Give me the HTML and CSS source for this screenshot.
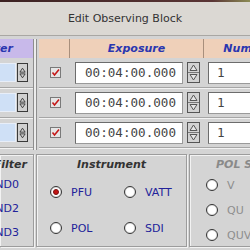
FILE: index.html
```
<!DOCTYPE html>
<html lang="en">
<head>
  <meta charset="UTF-8">
  <title>Edit Observing Block</title>
  <link rel="stylesheet" href="styles.css">
</head>
<body>

  <div class="desk"></div>
  <div class="titlebar">Edit Observing Block</div>

  <div class="dialog">
    <div class="table">
      <div class="left-col">
        <div class="head lav"><span>Filter</span></div>
        <div class="row clip">
          <span class="combo"></span>
          <span class="mini-spin"><svg width="8" height="15" viewBox="0 0 8 15"><path d="M4 2 L7 6.5 H1 Z M4 13 L7 8.5 H1 Z" fill="none" stroke="#333" stroke-width="1"/></svg></span>
        </div>
        <div class="row clip">
          <span class="combo"></span>
          <span class="mini-spin"><svg width="8" height="15" viewBox="0 0 8 15"><path d="M4 2 L7 6.5 H1 Z M4 13 L7 8.5 H1 Z" fill="none" stroke="#333" stroke-width="1"/></svg></span>
        </div>
        <div class="row clip">
          <span class="combo"></span>
          <span class="mini-spin"><svg width="8" height="15" viewBox="0 0 8 15"><path d="M4 2 L7 6.5 H1 Z M4 13 L7 8.5 H1 Z" fill="none" stroke="#333" stroke-width="1"/></svg></span>
        </div>
      </div>

      <div class="divider"></div>

      <div class="right-col">
        <div class="head peach">
          <span class="c-check"></span>
          <span class="c-exp">Exposure</span>
          <span class="c-num">Number</span>
        </div>
        <div class="row">
          <span class="c-check"><svg class="check" width="11" height="11" viewBox="0 0 11 11"><rect x="0.5" y="0.5" width="10" height="10" fill="#e6e6e6" stroke="#7a7a7a"/><path d="M2.5 5.5 L4.5 8 L9 2.5" fill="none" stroke="#c41a1a" stroke-width="1.6"/></svg></span>
          <span class="c-exp"><span class="time">00:04:00.000</span><span class="spin"><svg width="11" height="19" viewBox="0 0 11 19"><path d="M5.5 2 L9 7.5 H2 Z" fill="#e4e4e4" stroke="#555"/><path d="M0 9.5 H11" stroke="#777"/><path d="M5.5 17 L9 11.5 H2 Z" fill="#e4e4e4" stroke="#555"/></svg></span></span>
          <span class="c-num"><span class="num">1</span></span>
        </div>
        <div class="row">
          <span class="c-check"><svg class="check" width="11" height="11" viewBox="0 0 11 11"><rect x="0.5" y="0.5" width="10" height="10" fill="#e6e6e6" stroke="#7a7a7a"/><path d="M2.5 5.5 L4.5 8 L9 2.5" fill="none" stroke="#c41a1a" stroke-width="1.6"/></svg></span>
          <span class="c-exp"><span class="time">00:04:00.000</span><span class="spin"><svg width="11" height="19" viewBox="0 0 11 19"><path d="M5.5 2 L9 7.5 H2 Z" fill="#e4e4e4" stroke="#555"/><path d="M0 9.5 H11" stroke="#777"/><path d="M5.5 17 L9 11.5 H2 Z" fill="#e4e4e4" stroke="#555"/></svg></span></span>
          <span class="c-num"><span class="num">1</span></span>
        </div>
        <div class="row">
          <span class="c-check"><svg class="check" width="11" height="11" viewBox="0 0 11 11"><rect x="0.5" y="0.5" width="10" height="10" fill="#e6e6e6" stroke="#7a7a7a"/><path d="M2.5 5.5 L4.5 8 L9 2.5" fill="none" stroke="#c41a1a" stroke-width="1.6"/></svg></span>
          <span class="c-exp"><span class="time">00:04:00.000</span><span class="spin"><svg width="11" height="19" viewBox="0 0 11 19"><path d="M5.5 2 L9 7.5 H2 Z" fill="#e4e4e4" stroke="#555"/><path d="M0 9.5 H11" stroke="#777"/><path d="M5.5 17 L9 11.5 H2 Z" fill="#e4e4e4" stroke="#555"/></svg></span></span>
          <span class="c-num"><span class="num">1</span></span>
        </div>
      </div>
    </div>

    <div class="panels">
      <div class="panel p-filter">
        <div class="ptitle">Filter</div>
        <div class="flist">
          <span>ND0</span>
          <span>ND2</span>
          <span>ND3</span>
        </div>
      </div>

      <div class="panel p-inst">
        <div class="ptitle">Instrument</div>
        <div class="igrid">
          <label class="opt"><span class="radio on"></span>PFU</label>
          <label class="opt"><span class="radio"></span>VATT</label>
          <label class="opt"><span class="radio"></span>POL</label>
          <label class="opt"><span class="radio"></span>SDI</label>
        </div>
      </div>

      <div class="panel p-pol">
        <div class="ptitle">POL Setting</div>
        <div class="plist">
          <label class="opt off"><span class="radio"></span>V</label>
          <label class="opt off"><span class="radio"></span>QU</label>
          <label class="opt off"><span class="radio"></span>QUV</label>
        </div>
      </div>
    </div>
  </div>

</body>
</html>
```

FILE: styles.css
```
body {
  margin: 0;
  width: 250px;
  height: 250px;
  overflow: hidden;
  background: #d4d4d4;
  font-family: 'DejaVu Sans', sans-serif;
}

.desk {
  height: 2px;
  background: linear-gradient(90deg, #3c2222, #5a3535 85%, #8c8c55);
}

.titlebar {
  height: 33px;
  background: #dbd8d3;
  border-bottom: 1px solid #a9a7a3;
  display: flex;
  align-items: center;
  justify-content: center;
  font-size: 11px;
  color: #333;
}

.dialog {
  padding-top: 3px;
}

.table {
  display: flex;
  height: 111px;
}

.left-col {
  width: 33px;
  overflow: hidden;
}

.divider {
  width: 2px;
  margin-right: 2px;
  border-left: 1px solid #8e8e8e;
  border-right: 1px solid #8e8e8e;
  background: #ececec;
}

.right-col {
  flex: 1;
  overflow: hidden;
}

.head {
  height: 19px;
  display: flex;
  align-items: center;
  font-size: 11px;
  font-weight: bold;
  font-style: italic;
  color: #2a36b0;
  white-space: nowrap;
}

.lav {
  background: #c8b9ea;
  justify-content: flex-end;
  padding-right: 20px;
}

.peach {
  background: #efd0b9;
}

.peach > span {
  height: 100%;
  display: flex;
  align-items: center;
  justify-content: center;
}

.c-check {
  width: 30px;
  flex: none;
  display: flex;
  align-items: center;
  justify-content: center;
}

.c-exp {
  width: 133px;
  flex: none;
  display: flex;
  align-items: center;
  border-left: 1px solid #a88f7c;
  border-right: 1px solid #a88f7c;
}

.row .c-exp {
  border-color: transparent;
}

.c-num {
  width: 88px;
  flex: none;
  display: flex;
  align-items: center;
}

.row {
  height: 29px;
  display: flex;
  align-items: center;
  border-bottom: 1px solid #a6a6a6;
  box-shadow: 0 1px 0 #f2f2f2;
}

.clip {
  justify-content: flex-end;
  padding-right: 5px;
  gap: 1px;
}

.combo {
  width: 40px;
  height: 19px;
  flex: none;
  background: #cfe0f6;
  border: 1px solid #e8eef8;
  box-sizing: border-box;
}

.mini-spin {
  width: 9px;
  height: 17px;
  flex: none;
  border: 1px solid #3a3a3a;
  background: #d0d0d0;
  display: flex;
  align-items: center;
  justify-content: center;
}

.mini-spin svg {
  width: 7px;
  height: 14px;
}

.check {
  margin-left: 2px;
}

.time {
  margin-left: 5px;
  width: 108px;
  height: 22px;
  box-sizing: border-box;
  background: #fff;
  border: 1px solid #9a9a9a;
  border-top-color: #6c6c6c;
  border-left-color: #6c6c6c;
  font-family: 'DejaVu Sans Mono', monospace;
  font-size: 12.6px;
  color: #444;
  padding-left: 9px;
  line-height: 20px;
}

.spin {
  margin-left: 4px;
  width: 13px;
  height: 21px;
  box-sizing: border-box;
  border: 1px solid #555;
  background: #d2d2d2;
  display: flex;
}

.num {
  margin-left: 4px;
  width: 100px;
  height: 22px;
  flex: none;
  box-sizing: border-box;
  background: #fff;
  border: 1px solid #9a9a9a;
  border-top-color: #6c6c6c;
  border-left-color: #6c6c6c;
  font-family: 'DejaVu Sans Mono', monospace;
  font-size: 12.6px;
  color: #444;
  padding-left: 8px;
  line-height: 20px;
}

.panels {
  margin-top: 4px;
  display: flex;
  gap: 2px;
  height: 93px;
}

.panel {
  flex: none;
  box-sizing: border-box;
  border: 1px solid #9c9c9c;
  box-shadow: inset 1px 1px 0 #f2f2f2, 1px 1px 0 #f2f2f2;
}

.ptitle {
  height: 18px;
  display: flex;
  align-items: center;
  justify-content: center;
  font-size: 11px;
  font-weight: bold;
  font-style: italic;
  color: #333;
  white-space: nowrap;
}

.p-filter {
  width: 34px;
  border-left: none;
  overflow: hidden;
}

.p-filter .ptitle {
  justify-content: flex-end;
  padding-right: 6px;
}

.flist {
  display: flex;
  flex-direction: column;
  align-items: flex-end;
  padding-right: 14px;
  padding-top: 5px;
  gap: 11px;
  font-size: 11px;
  color: #22229a;
}

.p-inst {
  width: 151px;
}

.igrid {
  display: grid;
  grid-template-columns: 74px 74px;
  row-gap: 22px;
  padding: 12px 0 0 13px;
}

.p-pol {
  width: 80px;
  border-right: none;
  overflow: hidden;
}

.p-pol .ptitle {
  color: #8a8a8a;
  justify-content: flex-start;
  padding-left: 26px;
}

.plist {
  display: flex;
  flex-direction: column;
  gap: 11px;
  padding: 5px 0 0 16px;
}

.opt {
  display: flex;
  align-items: center;
  gap: 9px;
  height: 14px;
  font-size: 11px;
  color: #22229a;
}

.opt.off {
  color: #8e8e8e;
}

.radio {
  width: 10px;
  height: 10px;
  flex: none;
  border: 1px solid #333;
  border-radius: 50%;
  background: #fff;
  box-shadow: inset 0 0 0 1px #e2e2e2;
  display: flex;
  align-items: center;
  justify-content: center;
}

.radio.on::after {
  content: "";
  width: 4px;
  height: 4px;
  border-radius: 50%;
  background: #c41414;
  border: 1px solid #7a1010;
}
```
